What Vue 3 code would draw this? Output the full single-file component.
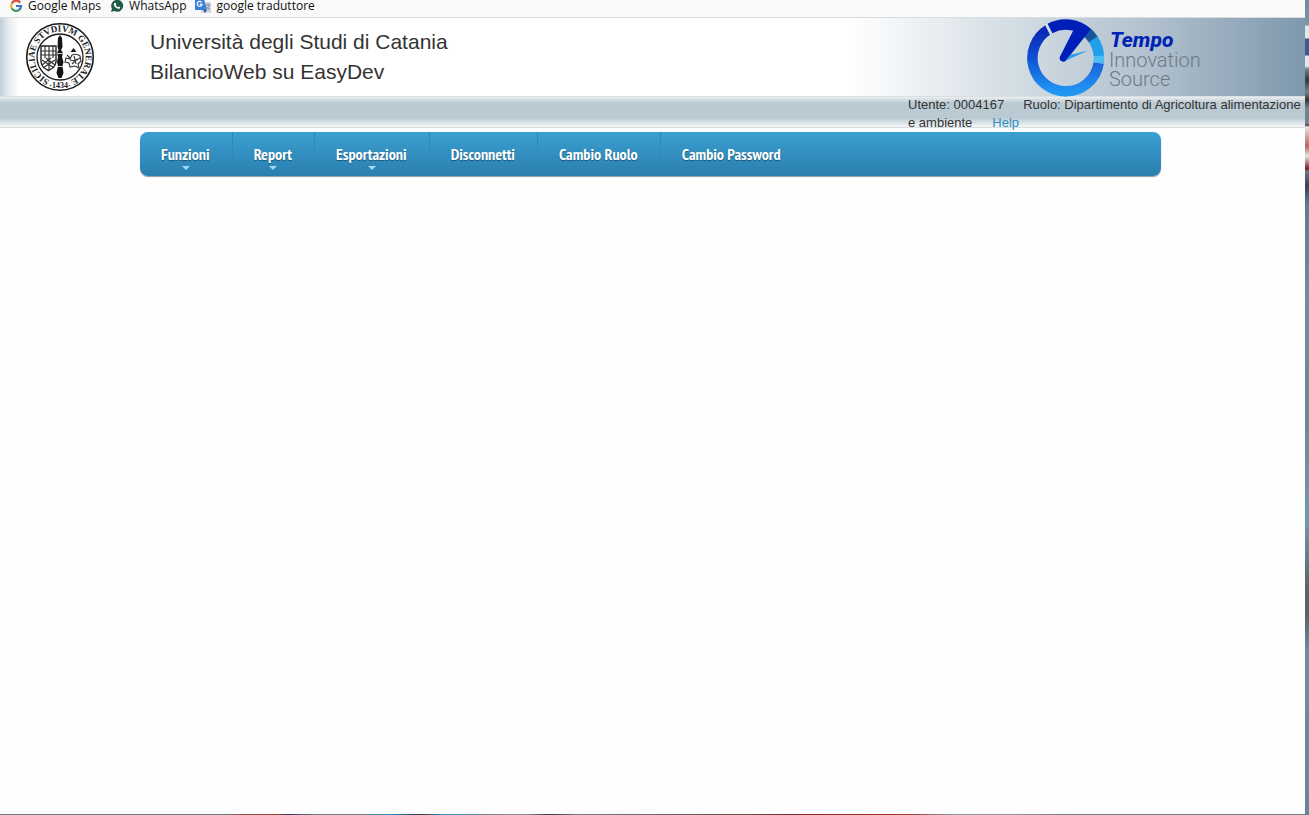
<script setup>
const menu = [
  { label: 'Funzioni', sub: true },
  { label: 'Report', sub: true },
  { label: 'Esportazioni', sub: true },
  { label: 'Disconnetti', sub: false },
  { label: 'Cambio Ruolo', sub: false },
  { label: 'Cambio Password', sub: false },
]
</script>

<template>
  <div class="desktop">
    <div class="window">
      <nav class="bookmarks" aria-label="Bookmarks">
        <a href="#" class="bookmark">
          <svg width="14" height="14" viewBox="0 0 14 14" fill="none" stroke-width="2.2">
            <path d="M11.2 3.6A5 5 0 0 0 2.7 4.5" stroke="#d9503f" />
            <path d="M2.7 4.5A5 5 0 0 0 2.7 9.3" stroke="#e9b33a" />
            <path d="M2.7 9.3A5 5 0 0 0 10 11" stroke="#3f9a58" />
            <path d="M10 11A5 5 0 0 0 12 7H7" stroke="#3a73c9" />
          </svg>
          <span>Google Maps</span>
        </a>
        <a href="#" class="bookmark">
          <svg width="14" height="14" viewBox="0 0 14 14">
            <path d="M1 13l.9-3.3A6 6 0 1 1 4.300 12.100z" fill="#1f5b45" />
            <path d="M4.700 3.800l1 .1.600 1.500-.6.800c.5 1 1.200 1.600 2.200 2l.8-.7 1.500.8c0 1.200-1 1.700-2 1.500C6 9.300 4.300 7.700 3.800 5.700c-.1-.8.2-1.500.9-1.900z" fill="#fff" />
          </svg>
          <span>WhatsApp</span>
        </a>
        <a href="#" class="bookmark">
          <svg width="16" height="14" viewBox="0 0 16 14">
            <rect x="6" y="3" width="10" height="11" fill="#d5d9de" />
            <path d="M0 0h9l3 11H0z" fill="#3b7fd9" />
            <path d="M8 11h4l-2 3z" fill="#2759b4" />
            <path d="M6.500 3.300A2.400 2.400 0 1 0 7 5.300H4.800" fill="none" stroke="#fff" stroke-width="1.200" />
            <path d="M10.500 6h5M13 4.500V6M14.500 6c-.5 2-1.500 3.300-3 4.500M11.500 7.500c.8 1.500 2 2.500 3.500 3.200" fill="none" stroke="#7c8994" />
          </svg>
          <span>google traduttore</span>
        </a>
      </nav>

      <header class="banner">
        <svg class="seal" width="70" height="70" viewBox="0 0 70 70" role="img" aria-label="Siciliae Studium Generale 1434">
          <defs>
            <path id="seal-ring" d="M35 60.500A25.500 25.500 0 1 1 35.100 60.500" />
          </defs>
          <circle cx="35" cy="35" r="33.300" fill="#fff" stroke="#1b1b1b" stroke-width="1.600" />
          <circle cx="35" cy="35" r="23" fill="none" stroke="#1b1b1b" stroke-width="1.300" />
          <text class="seal-text" text-anchor="middle"><textPath href="#seal-ring" startOffset="50%">SICILIAE STVDIVM GENERALE</textPath></text>
          <text class="seal-year" x="35" y="66" text-anchor="middle">·1434·</text>
          <path d="M16 24h15v16q-1 6-7.500 8.500Q17 46 16 40z" fill="#fff" stroke="#222" stroke-width="1.400" />
          <path d="M16 29h15M16 33h15M20 24v12M24 24v24M28 24v12M17 38l12 8M30 38l-12 8M17 43l9-7M30 43l-9-7" stroke="#333" stroke-width="1.200" fill="none" />
          <path d="M35 13l2 3 .5 9-1.500 3 2 3-1 4 1.500 5-1 4 1 7-2 5h-3l-2-5 1.500-7-1-4 1-5-1-4 1.500-3-1-3 .5-9z" fill="#161616" />
          <path d="M32 31.500h6M32 44.500h6" stroke="#fff" stroke-width=".8" />
          <path d="M45.500 30l3-4 3 4z" fill="#161616" />
          <path d="M41 36l4 1 2-4q5-2 8 1l1 5-3 3 1 4-4-2-5 1-1-4-4-1zM45 38l5 1 5-3M47 42l5-5M49 34l2 8M42 33l3 3" fill="none" stroke="#333" stroke-width="1.100" />
        </svg>
        <h1 class="title">Università degli Studi di Catania<br />BilancioWeb su EasyDev</h1>
        <svg class="brand" width="180" height="78" viewBox="0 0 180 78" role="img" aria-label="Tempo Innovation Source">
          <defs>
            <linearGradient id="ring-left" x1="0" y1="0" x2="0" y2="1">
              <stop offset="0" stop-color="#0828b4" />
              <stop offset="0.45" stop-color="#1150d2" />
              <stop offset="1" stop-color="#2196f3" />
            </linearGradient>
            <linearGradient id="ring-right" x1="0" y1="0" x2="0" y2="1">
              <stop offset="0" stop-color="#1b62dc" />
              <stop offset="1" stop-color="#2196f3" />
            </linearGradient>
          </defs>
          <g fill="none" stroke-width="10.500">
            <path d="M21.500 10.500A33.300 33.300 0 0 0 38.500 72.300" stroke="url(#ring-left)" />
            <path d="M37.500 72.300A33.300 33.300 0 0 0 71.700 44" stroke="url(#ring-right)" />
            <path d="M71.700 44A33.300 33.300 0 0 0 71.800 37" stroke="#4cbcf4" />
            <path d="M71.800 37A33.300 33.300 0 0 0 66.300 20.500" stroke="#20a0ec" />
            <path d="M66.300 20.500A33.300 33.300 0 0 0 60.500 13.800" stroke="#17599c" />
            <path d="M60.500 13.800A33.300 33.300 0 0 0 23 9.500" stroke="#001fb8" />
          </g>
          <path d="M18.500 5l5.500 11" stroke="#dce6ee" stroke-width="1.600" />
          <path d="M46 12L32.500 38.500a3.800 3.800 0 0 0 6.500 3L64 10z" fill="#001fb8" />
          <path d="M39 41.500L61 31.500 43 36z" fill="#259fe9" />
          <text class="brand-name" x="83" y="28">Tempo</text>
          <text class="brand-sub" x="82" y="48">Innovation</text>
          <text class="brand-sub" x="82" y="67">Source</text>
        </svg>
      </header>

      <div class="session">
        <p class="session-text">
          <span class="user">Utente: 0004167</span><span>Ruolo: Dipartimento di Agricoltura alimentazione e ambiente</span><a href="#" class="help">Help</a>
        </p>
      </div>

      <nav class="menu" aria-label="Menu">
        <a v-for="item in menu" :key="item.label" href="#" class="menu-item" :class="{ sub: item.sub }">{{ item.label }}</a>
      </nav>
    </div>
    <div class="edge" aria-hidden="true"></div>
    <div class="taskbar" aria-hidden="true"></div>
  </div>
</template>

<style>
body {
  margin: 0;
}
</style>

<style scoped>
.desktop {
  display: grid;
  grid-template-columns: 1fr 4px;
  grid-template-rows: 1fr 1px;
  min-height: 100vh;
  font-family: "Liberation Sans", Arial, sans-serif;
  color: #333;
}
.window {
  background: #fefefe;
  min-width: 0;
}
.bookmarks {
  display: flex;
  gap: 9px;
  height: 17px;
  padding-left: 9px;
  overflow: hidden;
  background: #f9f9fa;
}
.bookmark {
  display: flex;
  align-items: center;
  gap: 5px;
  height: 12px;
  font: 12px/12px "Open Sans", sans-serif;
  color: #111;
  text-decoration: none;
  white-space: nowrap;
}
.banner {
  display: flex;
  align-items: flex-start;
  height: 79px;
  box-sizing: border-box;
  padding: 2px 98px 0 25px;
  border-top: 1px solid #dbdee0;
  background:
    linear-gradient(90deg, #c3ced7 0, #e6ebef 8px, #fff0 20px),
    linear-gradient(90deg, #fff 65%, #d2dce3 78%, #b2c1ce 88%, #7e98ad 100%);
}
.seal {
  margin-top: 2px;
  flex: none;
}
.seal-text {
  font: bold 9px "Liberation Serif", serif;
  fill: #1b1b1b;
}
.seal-year {
  font: bold 8px "Liberation Serif", serif;
  fill: #1b1b1b;
}
.title {
  margin: 7px 0 0 55px;
  font-size: 21px;
  line-height: 30px;
  font-weight: 400;
}
.brand {
  margin-left: auto;
  margin-top: -1px;
  flex: none;
}
.brand-name {
  font: italic 800 21px Roboto, sans-serif;
  fill: #0023b5;
}
.brand-sub {
  font: 300 20px Roboto, sans-serif;
  fill: #6c7b86;
}
.session {
  display: flex;
  justify-content: flex-end;
  height: 32px;
  box-sizing: border-box;
  border-top: 1px solid #dcdfe1;
  border-bottom: 1px solid #d9dcdd;
  background: linear-gradient(#e9eff1 0, #bacad2 6px, #bacad2 21px, #e9eff1 28px, #f2f5f6 100%);
}
.session-text {
  width: 397px;
  margin: -1px 0 0;
  font-size: 13px;
  line-height: 18px;
}
.user {
  margin-right: 19px;
}
.help {
  margin-left: 20px;
  color: #2f8fc4;
  text-decoration: none;
}
.menu {
  display: flex;
  height: 44px;
  margin: 4px 144px 0 140px;
  border-radius: 8px;
  background: linear-gradient(#3a9fd1, #2b7fae);
  box-shadow: 0 1px 1px #8b9ba5;
}
.menu-item {
  position: relative;
  padding: 0 22px 0 21px;
  border-right: 1px solid;
  border-image: linear-gradient(#2c81ae, #2c81ae00 90%) 1;
  font: bold 16px/44px "PT Sans Narrow", "Liberation Sans Narrow", "Open Sans", sans-serif;
  color: #fff;
  text-shadow: 0 1px 1px #1b5679;
  text-decoration: none;
  white-space: nowrap;
}
.menu-item:last-child {
  border-right: 0;
}
.sub::after {
  content: "";
  position: absolute;
  left: 50%;
  top: 34px;
  margin-left: -4px;
  border: 4px solid transparent;
  border-top-color: #a5d8f3;
  border-bottom: 0;
}
.edge {
  background: linear-gradient(#6d899b 0, #7e97a8 25px, #e3e5e8 26px, #e3e5e8 38px, #42578f 39px, #42578f 55px, #e3e5e8 56px, #e3e5e8 66px, #72818c 69px, #34383d 80px, #76838e 92px, #3a3432 100px, #72828e 108px, #72828e 124px, #7b1d20 125px, #dfe6ea 127px, #b66759 146px, #dfe6ea 156px, #7b1d20 169px, #6b7a85 171px, #334354 186px, #5e7b92 204px, #6e8f9e 300px, #6d8795 410px, #7399a8 520px, #56656c 590px, #56656c 615px, #6d8d9f 650px, #67869c 100%);
}
.taskbar {
  grid-column: 1 / -1;
  background: linear-gradient(90deg, #667a80 0, #667a80 17%, #a3453d 19%, #a3453d 21%, #3a3159 22%, #697b80 24%, #697b80 28%, #2789c4 30%, #3b3340 32%, #3b91c4 34%, #71838b 37%, #8e8e90 40%, #3b3452 42%, #707b7e 44%, #6c4c4e 57%, #8a2522 61%, #a0362e 69%, #8498a3 73%, #94908f 78%, #677b82 82%, #677b82 100%);
}
</style>
